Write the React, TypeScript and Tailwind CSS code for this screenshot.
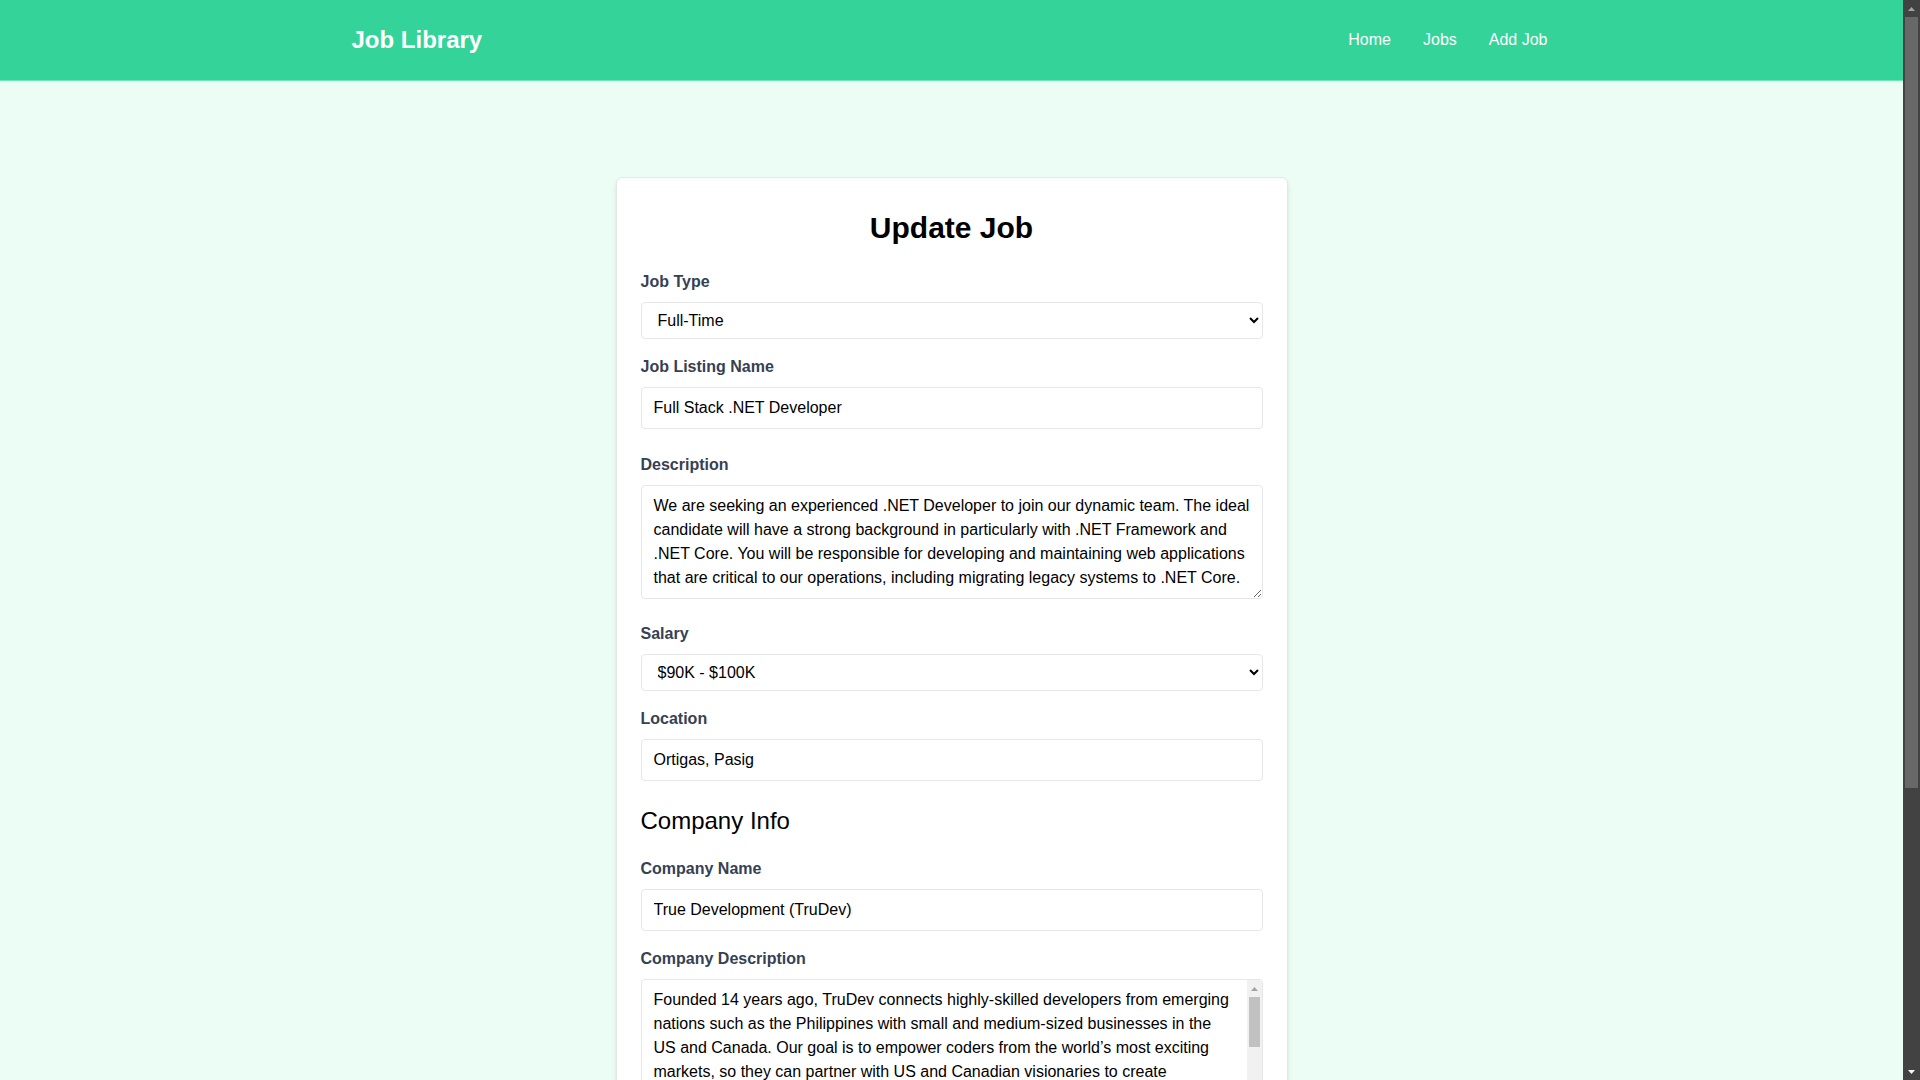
import { useState } from "react";

const Navbar = () => {
  return (
    <nav className="bg-[#34d399] border-b border-[#6ee7b7]">
      <div className="mx-auto max-w-7xl px-2 sm:px-6 lg:px-8">
        <div className="flex h-20 items-center justify-between">
          <a href="#" className="ml-2 text-2xl font-bold text-white">
            Job Library
          </a>
          <div className="flex gap-2">
            <a href="#" className="text-white rounded-md px-3 py-2">
              Home
            </a>
            <a href="#" className="text-white rounded-md px-3 py-2">
              Jobs
            </a>
            <a href="#" className="text-white rounded-md px-3 py-2">
              Add Job
            </a>
          </div>
        </div>
      </div>
    </nav>
  );
};

const Arrow = ({ down, color }: { down?: boolean; color: string }) => (
  <svg width="7" height="4" viewBox="0 0 7 4" className="block">
    {down ? (
      <polygon points="0,0 7,0 3.5,4" fill={color} />
    ) : (
      <polygon points="0,4 7,4 3.5,0" fill={color} />
    )}
  </svg>
);

// the browser's dark page scrollbar on the right
const PageScrollbar = () => (
  <aside className="w-[17px] shrink-0 bg-[#424242] flex flex-col">
    <div className="h-[17px] flex items-center justify-center">
      <Arrow color="#a3a3a3" />
    </div>
    <div className="h-[771px] mx-[2px] bg-[#686868]" />
    <div className="flex-1" />
    <div className="h-[17px] flex items-center justify-center">
      <Arrow down color="#f5f5f5" />
    </div>
  </aside>
);

const inputClass = "border border-gray-200 rounded w-full py-2 px-3";

const App = () => {
  const [type, setType] = useState("Full-Time");
  const [title, setTitle] = useState("Full Stack .NET Developer");
  const [description, setDescription] = useState(
    "We are seeking an experienced .NET Developer to join our dynamic team. The ideal candidate will have a strong background in particularly with .NET Framework and .NET Core. You will be responsible for developing and maintaining web applications that are critical to our operations, including migrating legacy systems to .NET Core."
  );
  const [salary, setSalary] = useState("$90K - $100K");
  const [location, setLocation] = useState("Ortigas, Pasig");
  const [companyName, setCompanyName] = useState("True Development (TruDev)");
  const [companyDescription, setCompanyDescription] = useState(
    "Founded 14 years ago, TruDev connects highly-skilled developers from emerging nations such as the Philippines with small and medium-sized businesses in the US and Canada. Our goal is to empower coders from the world\u2019s most exciting markets, so they can partner with US and Canadian visionaries to create groundbreaking software products that drive growth."
  );
  const [email, setEmail] = useState("careers@trudev.com");
  const [phone, setPhone] = useState("555-555-5555");

  return (
    <div className="flex h-screen overflow-hidden font-['Liberation_Sans',Arial,sans-serif]">
      <main className="flex-1 min-w-0 overflow-hidden bg-[#ecfdf5]">
        <Navbar />

        <section>
          <div className="m-auto max-w-2xl py-24">
            <div className="bg-white px-6 py-8 mb-4 shadow-md rounded-md border border-gray-200">
              <form onSubmit={(e) => e.preventDefault()}>
                <h2 className="text-3xl text-center font-semibold mb-6">Update Job</h2>

                {/* Job Type */}
                <div className="mb-4">
                  <label htmlFor="type" className="block text-gray-700 font-bold mb-2">
                    Job Type
                  </label>
                  <select
                    id="type"
                    className={inputClass}
                    value={type}
                    onChange={(e) => setType(e.target.value)}
                  >
                    <option value="Full-Time">Full-Time</option>
                    <option value="Part-Time">Part-Time</option>
                    <option value="Remote">Remote</option>
                    <option value="Internship">Internship</option>
                  </select>
                </div>

                <div className="mb-4">
                  <label className="block text-gray-700 font-bold mb-2">Job Listing Name</label>
                  <input
                    type="text"
                    className={inputClass + " mb-2"}
                    value={title}
                    onChange={(e) => setTitle(e.target.value)}
                  />
                </div>

                <div className="mb-4">
                  <label className="block text-gray-700 font-bold mb-2">Description</label>
                  <textarea
                    className={inputClass}
                    rows={4}
                    value={description}
                    onChange={(e) => setDescription(e.target.value)}
                  />
                </div>

                <div className="mb-4">
                  <label className="block text-gray-700 font-bold mb-2">Salary</label>
                  <select
                    className={inputClass}
                    value={salary}
                    onChange={(e) => setSalary(e.target.value)}
                  >
                    <option value="Under $50K">Under $50K</option>
                    <option value="$50K - $60K">$50K - $60K</option>
                    <option value="$60K - $70K">$60K - $70K</option>
                    <option value="$70K - $80K">$70K - $80K</option>
                    <option value="$80K - $90K">$80K - $90K</option>
                    <option value="$90K - $100K">$90K - $100K</option>
                    <option value="Over $100K">Over $100K</option>
                  </select>
                </div>

                <div className="mb-4">
                  <label className="block text-gray-700 font-bold mb-2">Location</label>
                  <input
                    type="text"
                    className={inputClass + " mb-2"}
                    value={location}
                    onChange={(e) => setLocation(e.target.value)}
                  />
                </div>

                <h3 className="text-2xl mb-5">Company Info</h3>

                <div className="mb-4">
                  <label className="block text-gray-700 font-bold mb-2">Company Name</label>
                  <input
                    type="text"
                    className={inputClass}
                    value={companyName}
                    onChange={(e) => setCompanyName(e.target.value)}
                  />
                </div>

                <div className="mb-4">
                  <label className="block text-gray-700 font-bold mb-2">Company Description</label>
                  <div className="relative">
                    <textarea
                      className={inputClass + " pr-[27px] overflow-hidden resize-none"}
                      rows={4}
                      value={companyDescription}
                      onChange={(e) => setCompanyDescription(e.target.value)}
                    />
                    {/* textarea scrollbar */}
                    <div className="absolute right-[1px] top-[1px] h-[112px] w-[15px] bg-[#f1f1f1] flex flex-col">
                      <div className="h-[17px] flex items-center justify-center">
                        <Arrow color="#a3a3a3" />
                      </div>
                      <div className="h-[50px] mx-[2px] bg-[#c1c1c1]" />
                      <div className="flex-1" />
                      <div className="h-[17px] flex items-center justify-center">
                        <Arrow down color="#505050" />
                      </div>
                    </div>
                  </div>
                </div>

                <div className="mb-4">
                  <label className="block text-gray-700 font-bold mb-2">Contact Email</label>
                  <input
                    type="email"
                    className={inputClass}
                    value={email}
                    onChange={(e) => setEmail(e.target.value)}
                  />
                </div>

                <div className="mb-4">
                  <label className="block text-gray-700 font-bold mb-2">Contact Phone</label>
                  <input
                    type="tel"
                    className={inputClass}
                    value={phone}
                    onChange={(e) => setPhone(e.target.value)}
                  />
                </div>

                <div>
                  <button
                    type="submit"
                    className="bg-[#10b981] text-white font-bold py-2 px-4 rounded-full w-full"
                  >
                    Update Job
                  </button>
                </div>
              </form>
            </div>
          </div>
        </section>
      </main>
      <PageScrollbar />
    </div>
  );
};

export default App;
